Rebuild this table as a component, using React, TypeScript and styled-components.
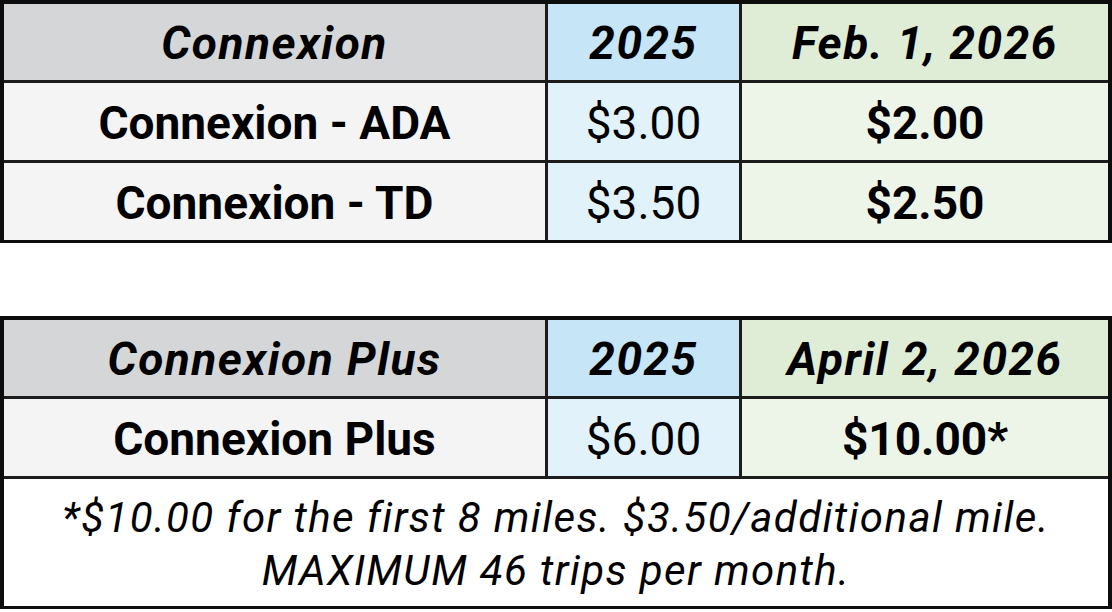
import styled, { createGlobalStyle } from 'styled-components';

const GlobalStyle = createGlobalStyle`
  html, body {
    margin: 0;
    padding: 0;
    background: #ffffff;
  }
  body {
    font-family: Roboto, "Liberation Sans", sans-serif;
    color: #000;
  }
`;

const rows1 = [
  { name: 'Connexion - ADA', old: '$3.00', next: '$2.00' },
  { name: 'Connexion - TD', old: '$3.50', next: '$2.50' },
];

const App = () => (
  <Page>
    <GlobalStyle />
    <Table>
      <Cell $tone="grayHead" $head>Connexion</Cell>
      <Cell $tone="blueHead" $head>2025</Cell>
      <Cell $tone="greenHead" $head>Feb. 1, 2026</Cell>
      {rows1.map((r) => (
        <Row key={r.name}>
          <Cell $tone="gray" $bold>{r.name}</Cell>
          <Cell $tone="blue">{r.old}</Cell>
          <Cell $tone="green" $bold>{r.next}</Cell>
        </Row>
      ))}
    </Table>

    <Table>
      <Cell $tone="grayHead" $head>Connexion Plus</Cell>
      <Cell $tone="blueHead" $head>2025</Cell>
      <Cell $tone="greenHead" $head>April 2, 2026</Cell>
      <Cell $tone="gray" $bold>Connexion Plus</Cell>
      <Cell $tone="blue">$6.00</Cell>
      <Cell $tone="green" $bold>$10.00*</Cell>
      <Note>
        *$10.00 for the first 8 miles. $3.50/additional mile.
        <br />
        MAXIMUM 46 trips per month.
      </Note>
    </Table>
  </Page>
);

const tones: Record<string, string> = {
  grayHead: '#d5d6d8',
  blueHead: '#c6e5f6',
  greenHead: '#dfedd7',
  gray: '#f4f4f4',
  blue: '#e2f2fb',
  green: '#edf5e9',
};

const Page = styled.div`
  width: 1112px;
  display: flex;
  flex-direction: column;
  gap: 73px;
`;

const Table = styled.div`
  display: grid;
  grid-template-columns: 541px 191px 1fr;
  grid-auto-rows: auto;
  gap: 3px;
  background: #1c1c1c;
  border: 4px solid #0d0d0d;
  border-bottom-width: 3px;
`;

const Row = styled.div`
  display: contents;
`;

const Cell = styled.div<{ $tone: string; $head?: boolean; $bold?: boolean }>`
  display: flex;
  align-items: center;
  justify-content: center;
  height: ${({ $head }) => ($head ? '76px' : '77px')};
  background: ${({ $tone }) => tones[$tone]};
  font-size: 46px;
  font-weight: ${({ $head, $bold }) => ($head || $bold ? 700 : 400)};
  font-style: ${({ $head }) => ($head ? 'italic' : 'normal')};
  letter-spacing: ${({ $head }) => ($head ? '1.5px' : '0')};
  padding-top: 2px;
  box-sizing: border-box;
`;

const Note = styled.div`
  grid-column: 1 / -1;
  height: 127px;
  display: flex;
  align-items: center;
  justify-content: center;
  text-align: center;
  background: #ffffff;
  font-style: italic;
  font-size: 42px;
  letter-spacing: 1.4px;
  line-height: 53px;
  padding-top: 2px;
  box-sizing: border-box;
`;

export default App;
